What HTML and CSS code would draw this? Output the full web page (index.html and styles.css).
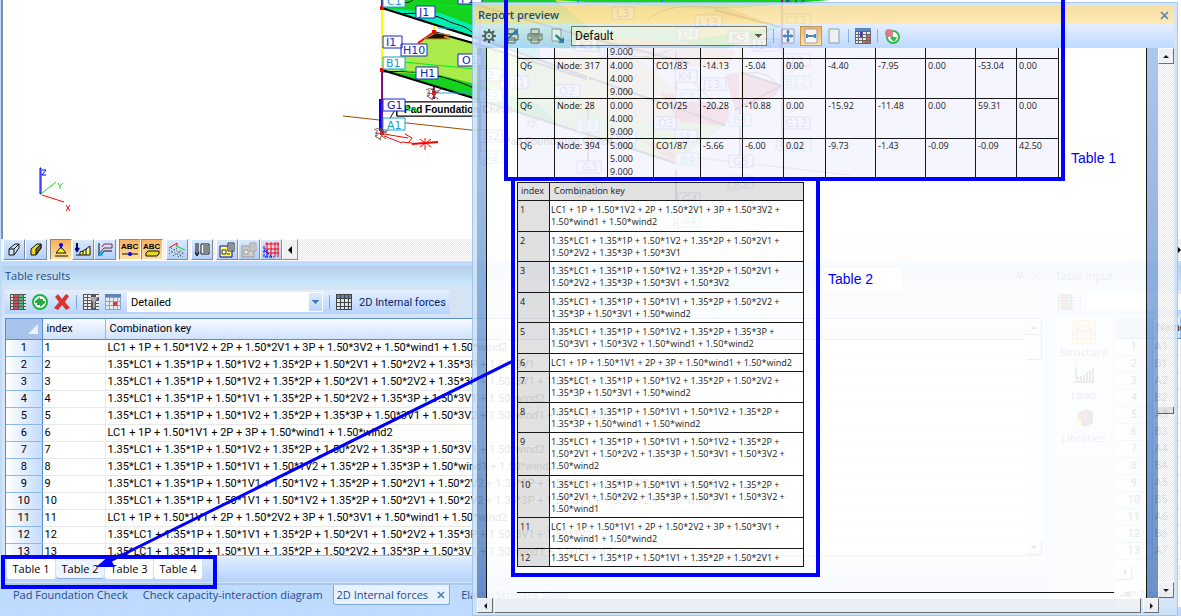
FILE: index.html
```html
<!DOCTYPE html>
<html lang="en">
<head>
<meta charset="utf-8">
<title>Table results and report preview</title>
<link rel="stylesheet" href="styles.css">
</head>
<body>
<div class="app">
  <main class="viewport">
    <svg class="scene" width="1181" height="239" viewBox="0 0 1181 239">
      <g stroke="none">
        <polygon points="382,0 830,0 715,10 780,27 690,63 476,39 382,8" fill="#14d21e"/>
        <polygon points="405,10 440,13 480,28 540,48 540,60 382,8" fill="#00eeb0"/>
        <polygon points="555,0 716,10 780,27 690,40 600,35" fill="#f0e040"/>
        <polygon points="716,10 730,8 760,20 700,16" fill="#f09030"/>
        <polygon points="588,26 680,30 700,62 600,50" fill="#60f0d8"/>
        <polygon points="382,70 418,43 434,32 480,46 590,70 690,100 725,125 675,163 560,125" fill="#aaea4b"/>
        <polygon points="382,70 400,73 440,75 475,84 540,105 560,126" fill="#14d21e"/>
        <polygon points="555,50 640,60 690,100 725,125 610,120 555,80" fill="#f2dc70"/>
        <polygon points="660,92 690,98 730,110 725,126 680,122" fill="#f04040"/>
        <polygon points="725,75 740,72 782,86 775,96 735,110" fill="#f05050"/>
        <polygon points="588,34 690,44 735,50 730,66 660,66" fill="#f3b070"/>
        <polygon points="640,140 676,148 676,164" fill="#e07030"/>
      </g>
      <g fill="none" stroke="#000">
        <path d="M400 1c6 4 12 0 14-2M400 14c20-2 35 0 50 8 10 4 16 3 26 14M382 72c30-2 60 2 92 16M560 40c40 0 70 30 110 10M648 20c20-20 60-12 78-12M655 70c30-10 50 30 70 40M740 75c20-6 30 0 40 12"/>
        <path d="M382 8 480 39 610 85 725 125M382 70 480 100 605 140 675 163M434 32 480 45 590 80M470 3 585 37 690 63M715 10 780 27M740 72 782 86 735 110" stroke-width="2"/>
      </g>
      <path d="M418 43 434 32" fill="none" stroke="#f00" stroke-width="2"/>
      <path d="M424 39l12-6 14 2-6 2 6 2z" fill="#201000" stroke="#c89020"/>
      <path d="M392 61l84 8M420 4l56 3M400 70l20 3" stroke="#00f018" fill="none"/>
      <path d="M436 93h40M438 28h20" stroke="#2aa0e0"/>
      <path d="M343 116 480 131M690 157l160 18" stroke="#985000"/>
      <g stroke-width="2">
        <path d="M382 0v8M382 70v62M434 87v12M480 0v160M588 100v70M676 50v150M740 100v60M782 0v150" stroke="#8a0a80"/>
        <path d="M382 8v62M434 26v8M588 30v70M676 140v30M740 40v60" stroke="#ffff00"/>
        <path d="M380 99v32" stroke="#0000ff"/>
        <path d="M578 0v4M662 0v4" stroke="#1090e0"/>
      </g>
      <path d="M396 108 382 132M397 108v8" stroke="#000"/>
      <g fill="#f00"><path d="M380 6h4v4h-4zM380 68h4v4h-4zM432 30h4v4h-4zM432 91h4v4h-4zM380 131h4v4h-4z"/></g>
      <g fill="none" stroke="#805048" stroke-width="1">
        <path id="support" d="M374 130q3-3 7 0t8-1M375 133q6 2 12-1M377 130v6l-2-1M380 128l2 8 4 3M384 131l-4 8M375 136l6 4"/>
        <use href="#support" x="52" y="-40"/><use href="#support" x="104" y="26"/><use href="#support" x="152" y="-12"/><use href="#support" x="200" y="58"/><use href="#support" x="298" y="90"/><use href="#support" x="352" y="52"/><use href="#support" x="400" y="12"/>
      </g>
      <g stroke="#f00" fill="none">
        <path d="M384 134l24 4m-24-2 18 7m3-9 7 4-3 4M402 142l10 1"/>
        <path d="M412 144l13-1 13-1" stroke-width="2"/><path d="M420 139l5 4-5 4M431 139l-5 4 5 4M425 138v12"/>
      </g>
      <path d="M397 116v-14h83M397 116h83" stroke="#000" fill="none"/>
      <rect x="397" y="102" width="83" height="14" fill="#fff" stroke="#000"/>
      <text x="404" y="113" class="foundation">Pad Foundation Check</text>
      <text x="504" y="145" class="foundation">Pad Foundation Check</text>
      <path d="M406 105l4 6m3-4 4 5" stroke="#0d0" stroke-width="2"/>
      <g class="tag-boxes">
        <path d="M416 6h19v12h-19zM383 36h19v12h-19zM401 44h26v12h-26zM416 67h22v12h-22zM383 99h22v12h-22zM458 54h24v12h-24z"/>
        <path d="M458-8h24V4h-24zM612 7h22v12h-22zM695 15h27v12h-27zM728 31h22v12h-22zM575 39h22v12h-22zM600 45h28v12h-28zM480 69h22v12h-22zM500 76h28v12h-28zM555 85h25v12h-25zM675 70h22v12h-22zM700 78h26v12h-26zM654 117h22v12h-22zM675 130h22v12h-22zM612 131h24v12h-24zM577 161h24v12h-24zM729 155h24v12h-24zM782 54h28v12h-28zM782 117h28v12h-28zM480 130h22v12h-22zM678 193h22v12h-22zM752 39h28v12h-28z"/>
      </g>
      <g class="tag-boxes tag-boxes--light">
        <path d="M383-5h22V7h-22zM383 57h22v12h-22zM383 118h22v12h-22z"/>
        <path d="M577 120h22v12h-22zM677 28h22v12h-22zM676 90h22v12h-22zM676 153h22v12h-22zM729 114h22v12h-22zM729 176h24v12h-24zM783 76h28v12h-28zM783 14h28v12h-28zM480 90h22v12h-22zM480 151h22v12h-22zM578 182h24v12h-24zM678 215h22v12h-22zM783 139h28v12h-28z"/>
      </g>
      <g class="tags">
        <text x="419" y="16">J1</text><text x="386" y="46">I1</text><text x="403" y="54">H10</text><text x="420" y="77">H1</text><text x="387" y="109">G1</text><text x="462" y="64">O1</text><text x="461" y="3">P1</text>
        <text x="616" y="17">L3</text><text x="698" y="26">L13</text><text x="732" y="41">K5</text><text x="579" y="49">K3</text><text x="603" y="55">J11</text><text x="484" y="79">I2</text><text x="503" y="86">H11</text><text x="559" y="95">O2</text><text x="678" y="80">K4</text><text x="703" y="88">J13</text><text x="658" y="127">O3</text><text x="680" y="140">I4</text><text x="616" y="141">H3</text><text x="582" y="171">G3</text><text x="733" y="165">G5</text><text x="786" y="64">I12</text><text x="785" y="127">G12</text><text x="484" y="140">G2</text><text x="682" y="203">G4</text><text x="755" y="49">J14</text><text x="785" y="4">K12</text>
      </g>
      <g class="tags tags--light">
        <text x="387" y="5">C1</text><text x="386" y="67">B1</text><text x="387" y="129">A1</text>
        <text x="581" y="130">B3</text><text x="681" y="38">D4</text><text x="680" y="100">C4</text><text x="680" y="163">B4</text><text x="733" y="124">B5</text><text x="733" y="187">A5</text><text x="785" y="86">B12</text><text x="785" y="24">C12</text><text x="484" y="100">B2</text><text x="484" y="161">A2</text><text x="584" y="192">A3</text><text x="682" y="225">A4</text><text x="785" y="149">A12</text>
      </g>
      <g fill="none" stroke-width="1">
        <path d="M40 168h1v26h-1z" stroke="#00f"/><path d="M42 170h4l-4 5h4" stroke="#00f"/>
        <path d="M42 193l14-11M58 183l2 3 3-3m-3 3v3" stroke="#0e0"/>
        <path d="M42 195l22 7M66 205l4 6m0-6-4 6" stroke="#f00"/>
      </g>
    </svg>
  </main>

  <div class="view-tools">
    <button class="vt" aria-label="Wireframe"><svg viewBox="0 0 16 16"><path d="M3 7l6-5h4v4l-5 7H3zM3 7h5v6M8 7l5-5" fill="#cfe0f8" stroke="#111"/></svg></button>
    <button class="vt" aria-label="Solid"><svg viewBox="0 0 16 16"><path d="M3 7l6-5h4v4l-5 7H3z" fill="#e8d818" stroke="#111"/><path d="M8 13V7l5-5v4z" fill="#7a6a00" stroke="#111"/></svg></button>
    <button class="vt vt--on vt--gap" aria-label="Supports"><svg viewBox="0 0 16 16"><path d="M8 5 3 11h10zM2 14h13" fill="#ff0" stroke="#111"/><circle cx="8" cy="3" r="2" fill="#00f"/><path d="M8 4v3" stroke="#00f"/></svg></button>
    <button class="vt" aria-label="Loads"><svg viewBox="0 0 16 16"><path d="M5 13v-3h3V9h3V7h3V5h1v8z" fill="#ffff60"/><path d="M1 13h14M5 13v-3M8 13V9m3 4V7m4 6V4M5 10l3-1 3-2 4-3" fill="none" stroke="#111"/><path d="M2 1v8M0 6l2 3 2-3" stroke="#000080" fill="none" stroke-width="2"/></svg></button>
    <button class="vt" aria-label="Results"><svg viewBox="0 0 16 16"><path d="M5 5l2-3h8v4H7L2 12" fill="none" stroke="#902040"/><path d="M2 1v13M4 13l3-4h8" fill="none" stroke="#111"/><circle cx="4" cy="12" r="2" fill="#0af"/></svg></button>
    <button class="vt vt--on vt--gap" aria-label="Node labels"><svg class="wide" viewBox="0 0 18 16"><text x="0" y="7" class="abc">ABC</text><path d="M1 12h16" stroke="#111"/><circle cx="9" cy="12" r="2" fill="#00f"/></svg></button>
    <button class="vt vt--on" aria-label="Member labels"><svg class="wide" viewBox="0 0 18 16"><text x="0" y="7" class="abc">ABC</text><path d="M3 11l2-2h11v3l-2 2H3z" fill="#e8d818" stroke="#111"/></svg></button>
    <button class="vt vt--gap" aria-label="Mesh"><svg viewBox="0 0 16 16"><path d="M0 6l8-5v3" stroke="#f00" fill="none"/><path d="M7 4l9 4" stroke="#0c4"/><path d="M0 8l14 7M2 6l13 6M0 12l8-6M4 14l9-6M9 15l6-5" stroke="#333" stroke-dasharray="1 2"/></svg></button>
    <button class="vt vt--gap" aria-label="Dimensions"><svg viewBox="0 0 16 16"><path d="M2 1v12M4 1v12M1 10l2 4 2-4" fill="none" stroke="#111"/><path d="M7 2h8v10H7zM9 4h5M9 6h5M9 8h5M9 10h5" fill="#fff" stroke="#111"/></svg></button>
    <button class="vt vt--gap" aria-label="Properties"><svg viewBox="0 0 16 16"><path d="M1 4h12v11H1z" fill="#ff5" stroke="#00c"/><path d="M3 8h4v4H3zM8 12h3" fill="#fff" stroke="#333"/><path d="M9 1h6v8H9zM10 3h4M10 5h4M10 7h4" fill="#fff" stroke="#223"/></svg></button>
    <button class="vt" aria-label="Properties unavailable"><svg viewBox="0 0 16 16"><path d="M1 4h12v11H1z" fill="#ccc" stroke="#999"/><path d="M3 8h4v4H3z" fill="#eee" stroke="#999"/><path d="M9 1h6v8H9zM10 3h4M10 5h4M10 7h4" fill="#eee" stroke="#999"/></svg></button>
    <button class="vt" aria-label="Grid"><svg viewBox="0 0 16 16"><path d="M4 0v12M8 0v14M12 0v15M15 0v15M2 2h14M1 7h15M3 11h13" stroke="#f00"/><path d="M1 4v11h10M1 8l8 7M4 8v7" stroke="#00f" stroke-dasharray="3 1" fill="none"/></svg></button>
    <button class="vt vt--more" aria-label="More tools"><span class="tri tri--left"></span></button>
    <span class="view-tools-end tri tri--right"></span>
  </div>

  <div class="dock">
    <section class="panel results">
      <header class="panel-title"><h2>Table results</h2><span class="panel-ctl"><button aria-label="Pin"><svg width="8" height="9" viewBox="0 0 8 9"><path d="M2 0v5M6 0v5M2 0h4M0 5h8M4 5v4" fill="none" stroke="#345"/></svg></button><button aria-label="Close panel"><svg width="9" height="9" viewBox="0 0 9 9"><path d="M1 1l7 7M8 1 1 8" stroke="#345"/></svg></button></span></header>
      <div class="panel-tools">
        <div class="tools-fill">
          <button class="ic" aria-label="Columns"><svg viewBox="0 0 16 16"><path fill="#555" d="M0 0h16v16H0z"/><path fill="#d9e6da" d="M1 1h2v2H1zM1 4h2v2H1zM1 7h2v2H1zM1 10h2v2H1zM1 13h2v2H1zM14 1h2v2h-2zM14 4h2v2h-2zM14 7h2v2h-2zM14 10h2v2h-2zM14 13h2v2h-2z"/><path fill="#e04858" d="M4 1h4v2H4zM4 4h4v2H4zM4 7h4v2H4zM4 10h4v2H4zM4 13h4v2H4z"/><path fill="#52b870" d="M9 1h4v2H9zM9 4h4v2H9zM9 7h4v2H9zM9 10h4v2H9zM9 13h4v2H9z"/></svg></button>
          <button class="ic" aria-label="Refresh"><svg viewBox="0 0 16 16"><circle cx="8" cy="8" r="7" fill="#fff" stroke="#1cb43c" stroke-width="2"/><path d="M3 7l5-4v2h3v2h2v2l-5 4v-2H5V9H3z" fill="#2aa848"/></svg></button>
          <button class="ic" aria-label="Delete"><svg viewBox="0 0 16 16"><path d="M1 3l3-3 4 5 4-5 3 2-4 6 5 6-4 2-4-5-4 5-4-2 5-6z" fill="#d93530"/></svg></button>
          <span class="sep"></span>
          <button class="ic" aria-label="Filter"><svg viewBox="0 0 16 16"><path fill="#555" d="M0 0h16v16H0z"/><path fill="#eee" d="M1 1h3v2H1zM1 4h3v2H1zM1 7h3v2H1zM1 10h3v2H1zM1 13h3v2H1zM5 1h3v2H5zM5 4h3v2H5zM5 7h3v2H5zM5 10h3v2H5zM5 13h3v2H5zM13 1h3v2h-3zM13 7h3v2h-3zM13 10h3v2h-3zM13 13h3v2h-3z"/><path d="M6 3h9l-3 5v5l-2 2V8z" fill="#aaa"/></svg></button>
          <button class="ic" aria-label="Select cell"><svg viewBox="0 0 16 16"><path fill="#8ea3bd" d="M0 0h16v16H0z"/><path fill="#5f84b4" d="M0 0h16v3H0z"/><path fill="#e3ebf5" d="M1 4h3v3H1zM5 4h3v3H5zM9 4h3v3H9zM13 4h2v3h-2zM1 8h3v3H1zM5 8h3v3H5zM1 12h3v3H1zM5 12h3v3H5zM9 12h3v3H9zM13 8h2v3h-2zM13 12h2v3h-2z"/><path fill="#d83838" d="M8 8h4v4H8z"/></svg></button>
          <select class="combo" aria-label="Detail level"><option>Detailed</option></select>
          <span class="sep"></span>
          <button class="force"><svg class="i16" viewBox="0 0 16 16"><path fill="#444" d="M0 0h16v16H0z"/><path fill="#5288b8" d="M1 1h3v3H1zM5 1h3v3H5zM9 1h3v3H9zM13 1h2v3h-2z"/><path fill="#dde3ea" d="M1 5h3v3H1zM5 5h3v3H5zM9 5h3v3H9zM13 5h2v3h-2zM1 9h3v3H1zM5 9h3v3H5zM9 9h3v3H9zM13 9h2v3h-2zM1 13h3v2H1zM5 13h3v2H5zM9 13h3v2H9zM13 13h2v2h-2z"/></svg>2D Internal forces</button>
        </div>
      </div>
      <div class="grid-wrap">
        <table class="grid">
          <thead><tr><th class="corner"><svg width="10" height="10" viewBox="0 0 10 10"><path d="M10 0v10H0z" fill="#e9f1fb"/></svg></th><th class="c-index">index</th><th>Combination key</th></tr></thead>
          <tbody>
            <tr><th>1</th><td>1</td><td>LC1 + 1P + 1.50*1V2 + 2P + 1.50*2V1 + 3P + 1.50*3V2 + 1.50*wind1 + 1.50*wind2</td></tr>
            <tr><th>2</th><td>2</td><td>1.35*LC1 + 1.35*1P + 1.50*1V2 + 1.35*2P + 1.50*2V1 + 1.50*2V2 + 1.35*3P + 1.50*3V1</td></tr>
            <tr><th>3</th><td>3</td><td>1.35*LC1 + 1.35*1P + 1.50*1V2 + 1.35*2P + 1.50*2V1 + 1.50*2V2 + 1.35*3P + 1.50*3V1 + 1.50*3V2</td></tr>
            <tr><th>4</th><td>4</td><td>1.35*LC1 + 1.35*1P + 1.50*1V1 + 1.35*2P + 1.50*2V2 + 1.35*3P + 1.50*3V1 + 1.50*wind2</td></tr>
            <tr><th>5</th><td>5</td><td>1.35*LC1 + 1.35*1P + 1.50*1V2 + 1.35*2P + 1.35*3P + 1.50*3V1 + 1.50*3V2 + 1.50*wind1 + 1.50*wind2</td></tr>
            <tr><th>6</th><td>6</td><td>LC1 + 1P + 1.50*1V1 + 2P + 3P + 1.50*wind1 + 1.50*wind2</td></tr>
            <tr><th>7</th><td>7</td><td>1.35*LC1 + 1.35*1P + 1.50*1V2 + 1.35*2P + 1.50*2V2 + 1.35*3P + 1.50*3V1 + 1.50*wind2</td></tr>
            <tr><th>8</th><td>8</td><td>1.35*LC1 + 1.35*1P + 1.50*1V1 + 1.50*1V2 + 1.35*2P + 1.35*3P + 1.50*wind1 + 1.50*wind2</td></tr>
            <tr><th>9</th><td>9</td><td>1.35*LC1 + 1.35*1P + 1.50*1V1 + 1.50*1V2 + 1.35*2P + 1.50*2V1 + 1.50*2V2 + 1.35*3P + 1.50*3V1 + 1.50*3V2 + 1.50*wind2</td></tr>
            <tr><th>10</th><td>10</td><td>1.35*LC1 + 1.35*1P + 1.50*1V1 + 1.50*1V2 + 1.35*2P + 1.50*2V1 + 1.50*2V2 + 1.35*3P + 1.50*3V1 + 1.50*3V2 + 1.50*wind1</td></tr>
            <tr><th>11</th><td>11</td><td>LC1 + 1P + 1.50*1V1 + 2P + 1.50*2V2 + 3P + 1.50*3V1 + 1.50*wind1 + 1.50*wind2</td></tr>
            <tr><th>12</th><td>12</td><td>1.35*LC1 + 1.35*1P + 1.50*1V1 + 1.35*2P + 1.50*2V1 + 1.50*2V2 + 1.35*3P + 1.50*3V1 + 1.50*3V2</td></tr>
            <tr><th>13</th><td>13</td><td>1.35*LC1 + 1.35*1P + 1.50*1V1 + 1.35*2P + 1.50*2V2 + 1.35*3P + 1.50*3V1 + 1.50*wind1 + 1.50*wind2</td></tr>
          </tbody>
        </table>
        <div class="vbar vbar--soft"><span class="sb sb--up"></span><span class="thumb"></span><span class="sb sb--down"></span></div>
      </div>
      <nav class="sheets">
        <button>Table 1</button><button class="sheet-on">Table 2</button><button>Table 3</button><button>Table 4</button>
      </nav>
      <nav class="dock-tabs">
        <button>Pad Foundation Check</button><button>Check capacity-interaction diagram</button><button class="tab-on">2D Internal forces <svg width="8" height="8" viewBox="0 0 8 8"><path d="M1 1l6 6M7 1 1 7" stroke="#4a78b0" stroke-width="1.500"/></svg></button><button>Elastic Stresses Slabs</button>
      </nav>
    </section>

    <section class="panel input-panel">
      <header class="panel-title"><h2>Table input</h2></header>
      <div class="panel-tools">
        <div class="tools-fill tools-fill--wide">
          <button class="ic" aria-label="Input columns"><svg viewBox="0 0 16 16"><path fill="#555" d="M0 0h16v16H0z"/><path fill="#d9e6da" d="M1 1h2v2H1zM1 4h2v2H1zM1 7h2v2H1zM1 10h2v2H1zM1 13h2v2H1zM14 1h2v2h-2zM14 4h2v2h-2zM14 7h2v2h-2zM14 10h2v2h-2zM14 13h2v2h-2z"/><path fill="#e04858" d="M4 1h4v2H4zM4 4h4v2H4zM4 7h4v2H4zM4 10h4v2H4z"/><path fill="#52b870" d="M9 1h4v2H9zM9 4h4v2H9zM9 7h4v2H9zM9 10h4v2H9z"/></svg></button>
          <span class="sep"></span><span class="blank-combo"></span>
        </div>
      </div>
      <div class="input-body">
        <div class="cats">
          <button class="cat"><svg class="cat-on" viewBox="0 0 24 24"><path d="M4 9l8-4 8 4v10H4z" fill="#eee6c8" stroke="#666"/><path d="M4 11h16" stroke="#666"/></svg>Structure</button>
          <button class="cat"><svg viewBox="0 0 24 24"><path d="M2 19h20M6 18v-4m3 4v-5m3 5v-6m3 6V9m3 9V7m3 11V5" stroke="#444" stroke-width="2"/><path d="M4 4v12" stroke="#0a0" stroke-width="2"/></svg>Load</button>
          <button class="cat"><svg viewBox="0 0 24 24"><path d="M6 7l8-4 7 3v11l-7 4-8-3z" fill="#444"/><path d="M7 8h7v5H7z" fill="#d22"/><path d="M3 13h6v6H3z" fill="#ee2"/></svg>Libraries</button>
        </div>
        <div class="side-grid">
          <table class="grid">
            <thead><tr><th class="corner"></th><th>Name</th></tr></thead>
            <tbody>
              <tr><th>1</th><td>A1</td></tr><tr><th>2</th><td>B1</td></tr><tr><th>3</th><td>A2</td></tr><tr><th>4</th><td>B2</td></tr><tr><th>5</th><td>A3</td></tr><tr><th>6</th><td>B3</td></tr><tr><th>7</th><td>A4</td></tr><tr><th>8</th><td>B4</td></tr><tr><th>9</th><td>A5</td></tr><tr><th>10</th><td>B5</td></tr><tr><th>11</th><td>A6</td></tr><tr><th>12</th><td>B6</td></tr><tr><th>13</th><td>A7</td></tr>
            </tbody>
          </table>
          <div class="hbar hbar--side"><span class="sb sb--left"></span></div>
          <nav class="node-tab"><button><svg class="i16" viewBox="0 0 16 16"><path d="M0 10l5-4h11l-4 4z" fill="#ee2" stroke="#555"/><path d="M6 6h4v4H6z" fill="#22c"/></svg>Nodes</button></nav>
        </div>
      </div>
    </section>
  </div>
</div>

<section class="preview">
  <header class="preview-title"><h1>Report preview</h1><button aria-label="Close preview"><svg width="9" height="9" viewBox="0 0 9 9"><path d="M1 1l7 7M8 1 1 8" stroke="#3f73b3" stroke-width="1.500"/></svg></button></header>
  <div class="preview-tools">
    <button class="ic" aria-label="Settings"><svg viewBox="0 0 16 16"><path d="M8 1v14M1 8h14M3 3l10 10M13 3 3 13" stroke="#555" stroke-width="2"/><circle cx="8" cy="8" r="4" fill="#ddd" stroke="#555" stroke-width="2"/><circle cx="8" cy="8" r="1" fill="#555"/></svg></button>
    <button class="ic" aria-label="Quick print"><svg viewBox="0 0 16 16"><path d="M4 1h7v5H4zM1 6h13v6H1zM4 10h7v5H4z" fill="#ddd" stroke="#555"/><path d="M4 9l10-9v7l-4-1-5 5z" fill="#2277dd"/></svg></button>
    <button class="ic" aria-label="Print"><svg viewBox="0 0 16 16"><path d="M4 1h8v5H4zM1 6h14v6H1zM4 10h8v5H4z" fill="#ddd" stroke="#666"/><path d="M2 7h12v2H2z" fill="#999"/></svg></button>
    <button class="ic" aria-label="Export"><svg viewBox="0 0 16 16"><path d="M2 1h9v12H2z" fill="#f4f6fa" stroke="#99a"/><path d="M6 6l6 5 2-2v6H8l2-2-5-5z" fill="#3d78a8"/></svg></button>
    <select class="combo combo--preview" aria-label="Template"><option>Default</option></select>
    <span class="sep"></span>
    <button class="ic" aria-label="Fit page"><svg viewBox="0 0 16 16"><path d="M2 1h12v14H2z" fill="#eef" stroke="#999"/><path d="M8 2v12M3 8h10" stroke="#3d78b8" stroke-width="2" fill="none"/><path d="M6 4h4M6 12h4M5 6v4M11 6v4" stroke="#3d78b8"/></svg></button>
    <button class="ic ic--on" aria-label="Fit width"><svg viewBox="0 0 16 16"><path d="M2 1h12v14H2z" fill="#f4f4f4" stroke="#999"/><path d="M3 8h10M4 6v4M12 6v4" stroke="#3d78b8" stroke-width="2"/></svg></button>
    <button class="ic" aria-label="Actual size"><svg viewBox="0 0 16 16"><path d="M3 1h10v14H3z" fill="#eee" stroke="#79a"/></svg></button>
    <span class="sep"></span>
    <button class="ic" aria-label="Edit table"><svg viewBox="0 0 16 16"><path fill="#555" d="M0 0h16v16H0z"/><path fill="#4a7ab8" d="M0 0h16v3H0z"/><path fill="#e6e6ea" d="M1 4h2v2H1zM4 4h3v2H4zM8 4h3v2H8zM12 4h3v2h-3zM1 7h2v2H1zM4 7h3v2H4zM8 7h3v2H8zM1 10h2v2H1zM4 10h3v2H4zM8 10h3v2H8zM1 13h2v2H1zM4 13h3v2H4z"/><path fill="#d85050" d="M12 7h3v2h-3zM12 10h3v2h-3zM8 13h3v2H8zM12 13h3v2h-3z"/><path d="M6 4v5" stroke="#22c" stroke-width="2"/></svg></button>
    <span class="sep"></span>
    <button class="ic" aria-label="Regenerate"><svg viewBox="0 0 16 16"><circle cx="9" cy="9" r="6" fill="#fff" stroke="#1cb43c" stroke-width="2"/><path d="M6 10l3-3v2h4l-2 4H9z" fill="#2aa848"/><circle cx="5" cy="5" r="4" fill="#d87078"/></svg></button>
  </div>
  <div class="preview-body">
    <div class="desk">
      <article class="sheet">
        <table class="forces">
          <colgroup><col class="w37"><col class="w53"><col class="w46"><col class="w47"><col class="w42"><col class="w41"><col class="w42"><col class="w50"><col class="w50"><col class="w50"><col class="w41"><col class="w42"></colgroup>
          <tbody>
            <tr class="cut"><td></td><td></td><td>9.000</td><td></td><td></td><td></td><td></td><td></td><td></td><td></td><td></td><td></td></tr>
            <tr><td>Q6</td><td>Node: 317</td><td>4.000<br>4.000<br>9.000</td><td>CO1/83</td><td>-14.13</td><td>-5.04</td><td>0.00</td><td>-4.40</td><td>-7.95</td><td>0.00</td><td>-53.04</td><td>0.00</td></tr>
            <tr><td>Q6</td><td>Node: 28</td><td>0.000<br>4.000<br>9.000</td><td>CO1/25</td><td>-20.28</td><td>-10.88</td><td>0.00</td><td>-15.92</td><td>-11.48</td><td>0.00</td><td>59.31</td><td>0.00</td></tr>
            <tr><td>Q6</td><td>Node: 394</td><td>5.000<br>5.000<br>9.000</td><td>CO1/87</td><td>-5.66</td><td>-6.00</td><td>0.02</td><td>-9.73</td><td>-1.43</td><td>-0.09</td><td>-0.09</td><td>42.50</td></tr>
          </tbody>
        </table>
        <table class="keys">
          <thead><tr><th>index</th><th>Combination key</th></tr></thead>
          <tbody>
            <tr><th>1</th><td>LC1 + 1P + 1.50*1V2 + 2P + 1.50*2V1 + 3P + 1.50*3V2 +<br>1.50*wind1 + 1.50*wind2</td></tr>
            <tr><th>2</th><td>1.35*LC1 + 1.35*1P + 1.50*1V2 + 1.35*2P + 1.50*2V1 +<br>1.50*2V2 + 1.35*3P + 1.50*3V1</td></tr>
            <tr><th>3</th><td>1.35*LC1 + 1.35*1P + 1.50*1V2 + 1.35*2P + 1.50*2V1 +<br>1.50*2V2 + 1.35*3P + 1.50*3V1 + 1.50*3V2</td></tr>
            <tr><th>4</th><td>1.35*LC1 + 1.35*1P + 1.50*1V1 + 1.35*2P + 1.50*2V2 +<br>1.35*3P + 1.50*3V1 + 1.50*wind2</td></tr>
            <tr><th>5</th><td>1.35*LC1 + 1.35*1P + 1.50*1V2 + 1.35*2P + 1.35*3P +<br>1.50*3V1 + 1.50*3V2 + 1.50*wind1 + 1.50*wind2</td></tr>
            <tr><th>6</th><td>LC1 + 1P + 1.50*1V1 + 2P + 3P + 1.50*wind1 + 1.50*wind2</td></tr>
            <tr><th>7</th><td>1.35*LC1 + 1.35*1P + 1.50*1V2 + 1.35*2P + 1.50*2V2 +<br>1.35*3P + 1.50*3V1 + 1.50*wind2</td></tr>
            <tr><th>8</th><td>1.35*LC1 + 1.35*1P + 1.50*1V1 + 1.50*1V2 + 1.35*2P +<br>1.35*3P + 1.50*wind1 + 1.50*wind2</td></tr>
            <tr><th>9</th><td>1.35*LC1 + 1.35*1P + 1.50*1V1 + 1.50*1V2 + 1.35*2P +<br>1.50*2V1 + 1.50*2V2 + 1.35*3P + 1.50*3V1 + 1.50*3V2 +<br>1.50*wind2</td></tr>
            <tr><th>10</th><td>1.35*LC1 + 1.35*1P + 1.50*1V1 + 1.50*1V2 + 1.35*2P +<br>1.50*2V1 + 1.50*2V2 + 1.35*3P + 1.50*3V1 + 1.50*3V2 +<br>1.50*wind1</td></tr>
            <tr><th>11</th><td>LC1 + 1P + 1.50*1V1 + 2P + 1.50*2V2 + 3P + 1.50*3V1 +<br>1.50*wind1 + 1.50*wind2</td></tr>
            <tr><th>12</th><td>1.35*LC1 + 1.35*1P + 1.50*1V1 + 1.35*2P + 1.50*2V1 +</td></tr>
          </tbody>
        </table>
        <hr class="foot-rule">
      </article>
    </div>
    <div class="vbar"><span class="sb sb--up"></span><span class="vbar-grip"></span><span class="sb sb--down"></span></div>
  </div>
  <div class="hbar hbar--preview"><span class="sb sb--left"></span><span class="thumb thumb--wide"></span><span class="sb sb--right"></span></div>
</section>

<svg class="notes" width="1181" height="616" viewBox="0 0 1181 616">
  <rect x="824" y="268" width="77" height="23" fill="#fff"/>
  <g fill="none" stroke="#00f" stroke-width="4">
    <path d="M506 0v179h557V0"/>
    <path d="M513 179h305v396H513z"/>
    <path d="M3 557h212v30H3z"/>
    <path d="M513 361 106 563" stroke-width="3"/>
  </g>
  <path d="M96 567l13-11 6 11z" fill="#00f"/>
  <text x="1071" y="163">Table 1</text>
  <text x="828" y="284">Table 2</text>
</svg>
</body>
</html>
```
FILE: styles.css
```css
* { box-sizing: border-box; }
body { margin: 0; height: 100vh; overflow: hidden; background: #bfdbff; font: 11px/16px "Open Sans", sans-serif; color: #000; position: relative; }
button { border: 0; margin: 0; padding: 0; background: none; font: inherit; color: inherit; display: inline-flex; align-items: center; justify-content: center; }
h1, h2 { margin: 0; font-size: 11px; font-weight: 400; }
table { border-collapse: collapse; }
.app { display: flex; flex-direction: column; height: 100%; padding-left: 1px; }

/* model view */
.viewport { flex: none; height: 239px; background: #fff; border-left: 2px solid #8090a0; overflow: hidden; }
.scene { display: block; margin-left: -3px; }
.foundation { font: bold 10px "Liberation Sans", sans-serif; }
.tag-boxes { fill: #fff; stroke: #1428c8; stroke-width: 1; }
.tag-boxes--light { stroke: #1c9ccc; }
.tags { font: 11px "DejaVu Sans", sans-serif; fill: #1428b8; }
.tags--light { fill: #1c9ccc; }

.view-tools { display: flex; flex: none; height: 22px; padding-left: 2px; align-items: stretch; border-bottom: 1px solid #fff; background: repeating-conic-gradient(#e8e8e8 0 25%, #fff 0 50%) 0 0 / 2px 2px; }
.vt { width: 22px; background: linear-gradient(#d8e8fc, #b4d0f8); border: 1px solid; border-color: #fff #7f8c9c #7f8c9c #fff; }
.vt svg { width: 16px; height: 16px; flex: none; }
.vt .wide { width: 18px; }
.vt--gap { margin-left: 3px; }
.vt--on { background: linear-gradient(#f8b060, #ffe0a0); border-color: #808890 #fff #fff #808890; }
.vt--more { width: 16px; background: #f0f0f0; }
.abc { font: bold 8px "Liberation Sans", sans-serif; }
.view-tools-end { margin-left: auto; align-self: center; }
.tri { width: 0; height: 0; border: 4px solid transparent; }
.tri--left { border-right-color: #000; border-left-width: 0; }
.tri--right { border-left-color: #000; border-right-width: 0; }

/* docked panels */
.dock { flex: 1; min-height: 0; display: flex; gap: 4px; padding: 5px 0 9px 1px; }
.panel { display: flex; flex-direction: column; min-width: 0; background: #d4e4f4; }
.results { flex: 1; }
.input-panel { flex: 0 0 131px; }
.panel-title { flex: none; display: flex; justify-content: space-between; height: 20px; padding: 0 3px; line-height: 20px; color: #1c4a90; background: linear-gradient(#b4cfe8, #cde9fc); }
.input-panel .panel-title { padding-left: 5px; }
.panel-ctl { display: flex; gap: 8px; padding-right: 2px; }
.panel-tools { flex: none; padding: 4px 0 4px 3px; }
.tools-fill { display: flex; align-items: center; width: 445px; height: 24px; padding-left: 5px; gap: 6px; background: linear-gradient(#e4efff, #b6d4ff); }
.tools-fill--wide { width: auto; }
.ic, .ic svg, .i16 { width: 16px; height: 16px; flex: none; }
.sep { width: 1px; height: 14px; background: #7fa8d8; flex: none; }
.combo { appearance: none; border: 0; border-radius: 0; margin: 0; width: 196px; height: 20px; padding: 0 4px; font: 11px Roboto, sans-serif; color: #000; background: conic-gradient(from -45deg at 50% 100%, #4a78b0 90deg, transparent 0) right 4px center / 7px 4px no-repeat, linear-gradient(#dcebff, #b9d5fb) right 1px center / 13px 18px no-repeat, #fff; }
.force { gap: 7px; font: 11px Roboto, sans-serif; color: #0a246a; }
.blank-combo { flex: 1; height: 16px; background: #fff; }

.grid-wrap { flex: 1; min-height: 0; overflow: hidden; display: flex; margin-left: 3px; margin-right: 4px; background: #fff; border-top: 1px solid #5a8cd0; border-left: 1px solid #5a8cd0; border-bottom: 1px solid #9ab8dc; }
.grid { flex: 1; table-layout: fixed; width: 100%; font: 11px/16px Roboto, sans-serif; align-self: flex-start; }
.grid thead th { height: 20px; padding: 0 4px; font-weight: 400; text-align: left; background: linear-gradient(#f8fbff, #cfe2fd); border-bottom: 1px solid #5a8cd0; border-right: 1px solid #8cb8f0; }
.grid thead .corner { width: 36px; background: #a8c4ea; text-align: right; padding: 4px 4px 0 0; border-right-color: #5a8cd0; }
.grid thead .c-index { width: 63px; }
.grid tbody th { height: 17px; padding: 0; font-weight: 400; background: linear-gradient(90deg, #fff, #c4dcfc); border-bottom: 1px solid #8cb8f0; border-right: 1px solid #5a8cd0; }
.grid td { height: 17px; padding: 0 2px; white-space: nowrap; border-bottom: 1px solid #e8e8e8; border-right: 1px solid #ececec; }

.sheets { flex: none; display: flex; height: 26px; padding: 2px 3px 3px 5px; background: linear-gradient(#e0edff, #b4d2fc); border-top: 1px solid #e8f2ff; }
.sheets button { width: 49px; height: 20px; background: #fff; border-right: 1px solid #d0e0f4; border-radius: 0 0 3px 3px; }
.sheets .sheet-on { background: #eef5ff; box-shadow: inset 0 -1px #88aee0; }
.dock-tabs { flex: none; display: flex; align-items: flex-start; gap: 1px; height: 24px; margin-top: 1px; padding-left: 4px; background: #bfdbff; border-top: 2px solid #a8c8ec; color: #1c4a90; white-space: nowrap; overflow: hidden; }
.dock-tabs button { height: 20px; padding: 0 7px; flex: none; }
.dock-tabs .tab-on { gap: 9px; padding: 0 4px 0 3px; margin: 0 3px 0 2px; background: #e8f2ff; border: 1px solid #7fa8dc; border-top: 0; border-radius: 0 0 3px 3px; }

.input-body { flex: 1; min-height: 0; display: flex; gap: 4px; padding-left: 5px; }
.cats { flex: 0 0 57px; display: flex; flex-direction: column; align-self: flex-start; gap: 3px; background: #eaf2fc; padding: 2px 0 8px; }
.cat { flex-direction: column; color: #1c4a90; height: 40px; }
.cat svg { width: 24px; height: 24px; flex: none; }
.cat-on { background: #ffd080; border: 1px solid #d0a050; }
.side-grid { flex: 1; min-width: 0; display: flex; flex-direction: column; background: #fff; }
.side-grid .grid { flex: none; }
.node-tab { margin-top: 6px; padding-left: 4px; color: #1c4a90; }
.node-tab button { gap: 4px; }

/* scroll bars */
.vbar { flex: none; display: flex; flex-direction: column; width: 16px; background: repeating-conic-gradient(#e8e8e8 0 25%, #fff 0 50%) 0 0 / 2px 2px; }
.hbar { flex: none; display: flex; height: 15px; background: repeating-conic-gradient(#e8e8e8 0 25%, #fff 0 50%) 0 0 / 2px 2px; }
.hbar--side { margin-top: 5px; }
.sb, .thumb { flex: none; background: #eef0f4; border: 1px solid; border-color: #fff #606060 #606060 #fff; }
.sb { width: 16px; height: 16px; display: flex; align-items: center; justify-content: center; }
.hbar .sb { height: 15px; }
.sb::before { content: ""; border: 3px solid transparent; }
.sb--up::before { border-bottom-color: #000; border-top-width: 0; }
.sb--down::before { border-top-color: #000; border-bottom-width: 0; }
.sb--left::before { border-right-color: #000; border-left-width: 0; }
.sb--right::before { border-left-color: #000; border-right-width: 0; }
.vbar .thumb { height: 25px; }
.vbar .sb--down { margin-top: auto; }
.thumb--wide { flex: 1; margin: 0 2px 0 1px; }

/* floating report window */
.preview { position: absolute; left: 472px; right: 3px; top: 2px; bottom: 0; display: flex; flex-direction: column; padding: 3px 3px 2px 4px; background: #cfe3f6; border: 1px solid #9cc4e8; opacity: 0.9; }
.preview-title { flex: none; display: flex; align-items: center; justify-content: space-between; height: 18px; margin-left: -2px; padding: 0 5px 0 3px; background: linear-gradient(#f4dc9c, #ffe8ac); }
.preview-title h1 { font-weight: 600; color: #15428b; }
.preview-tools { flex: none; display: flex; align-items: center; gap: 7px; height: 24px; margin-left: -2px; padding-left: 6px; background: linear-gradient(#e2eeff, #b6d6ff); }
.preview-tools .sep { margin: 0 -1px; }
.combo--preview { border: 1px solid #707070; padding: 0 3px; margin-left: -2px; font-size: 12px; background: conic-gradient(from -45deg at 50% 100%, #555 90deg, transparent 0) right 4px center / 7px 4px no-repeat, #f4f4e8; }
.ic--on { width: 22px; height: 20px; margin: 0 -3px; background: linear-gradient(#f8a848, #ffe0a0); border: 1px solid #c09048; }
.preview-body { flex: 1; min-height: 0; display: flex; }
.desk { flex: 1; min-width: 0; overflow: hidden; display: flex; padding: 0 11px 0 9px; background: linear-gradient(#a4c2ec, #5c86c4); }
.sheet { flex: 1; display: flex; flex-direction: column; background: #fff; border-left: 1px solid #000; border-right: 1px solid #000; padding-left: 30px; font: 9px/13px "Open Sans", sans-serif; }
.forces, .keys { flex: none; align-self: flex-start; table-layout: fixed; }
.forces { width: 541px; margin-top: -3px; background: #f5f5ff; }
.forces td { height: 40px; border: 1px solid #000; padding: 0 2px; vertical-align: top; white-space: nowrap; }
.forces .cut td { height: 13px; border-top: 0; }
.w37 { width: 37px; } .w53 { width: 53px; } .w46 { width: 46px; } .w47 { width: 47px; } .w42 { width: 42px; } .w41 { width: 41px; } .w50 { width: 50px; }
.keys { width: 287px; margin-top: 3px; line-height: 12px; }
.keys th, .keys td { border: 1px solid #000; padding: 3px 2px; text-align: left; vertical-align: top; font-weight: 400; white-space: nowrap; }
.keys td { padding-left: 1px; }
.keys th { background: #dedede; }
.keys tbody th { width: 32px; }
.keys thead th { padding: 2px 4px 3px; }
.keys thead th:first-child { width: 32px; padding: 2px 3px 3px; }
.keys tbody tr:nth-child(even) > * { padding-bottom: 2px; }
.foot-rule { width: 597px; height: 1px; border: 0; margin: 25px 0 0; background: #000; flex: none; }
.vbar-grip { height: 7px; margin-top: auto; background: #ddd; border-bottom: 1px solid #555; border-right: 1px solid #555; }
.preview .vbar .sb--down { margin-top: 168px; }
.hbar--preview { padding-right: 15px; background: #cfe3f6; }

/* annotations */
.notes { position: absolute; left: 0; top: 0; pointer-events: none; font: 14px "Liberation Sans", sans-serif; fill: #00f; }
```
